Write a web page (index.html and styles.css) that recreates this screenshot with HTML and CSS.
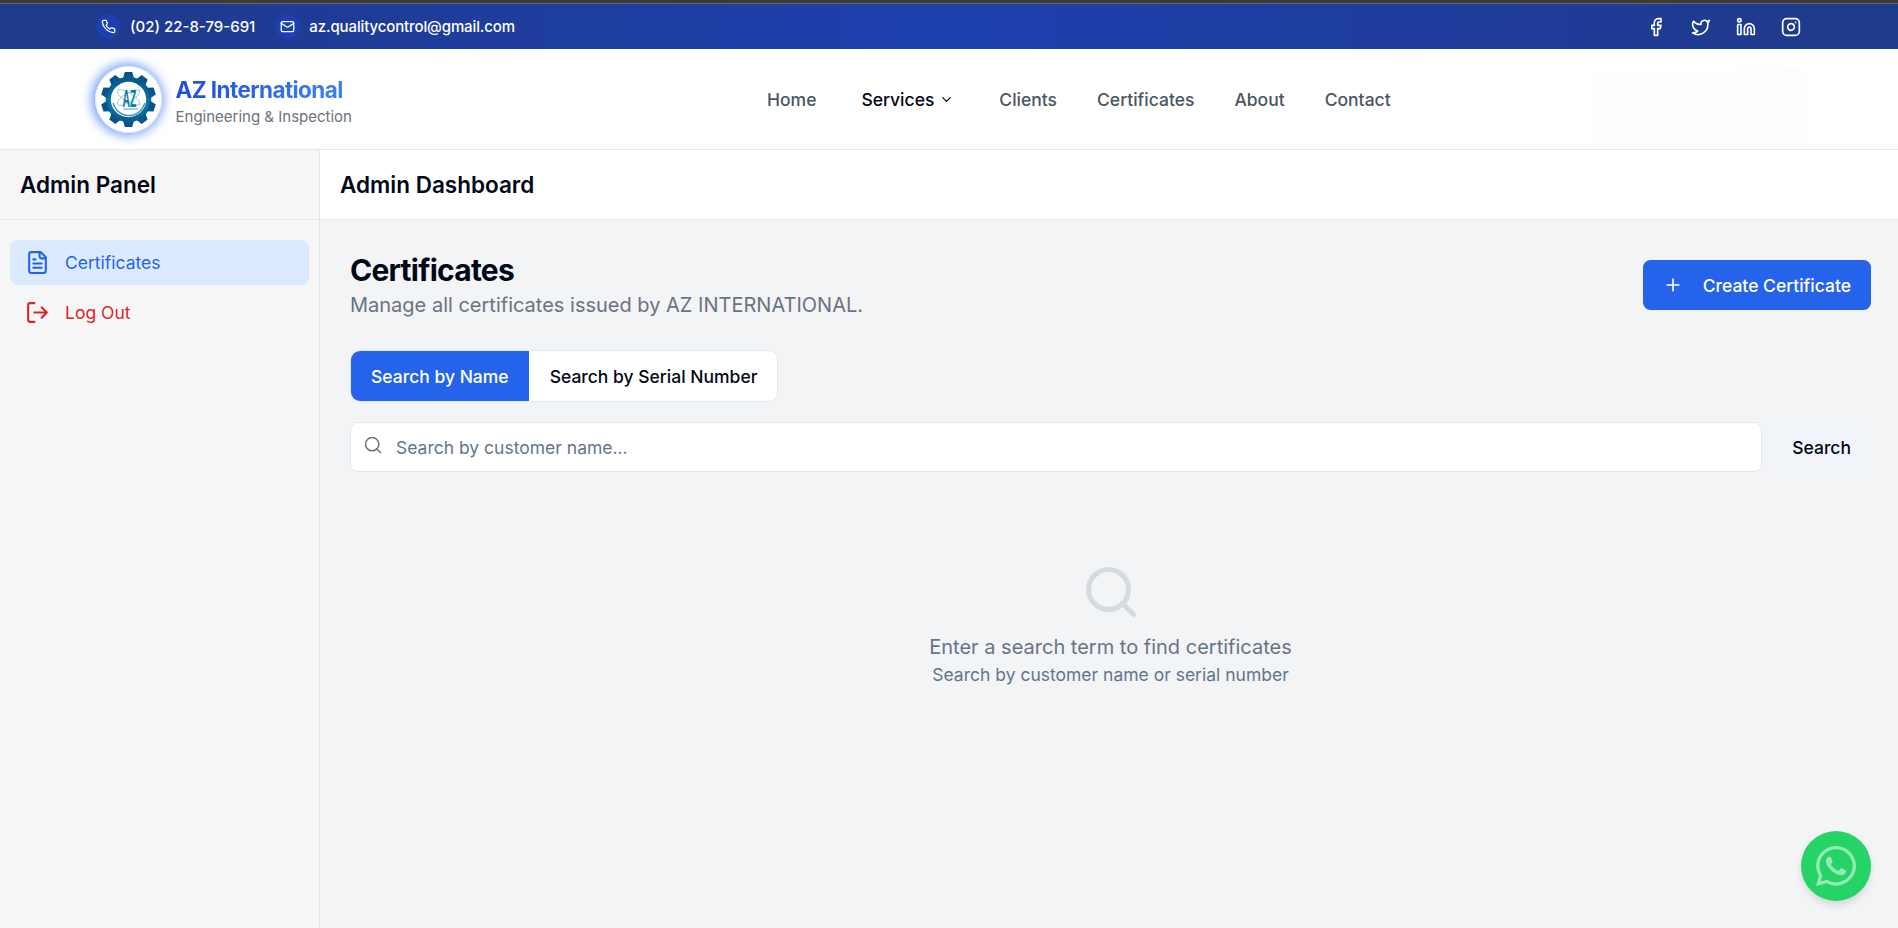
FILE: index.html
```html
<!DOCTYPE html>
<html lang="en">
<head>
<meta charset="utf-8">
<title>AZ International - Admin Dashboard</title>
<link rel="stylesheet" href="styles.css">
</head>
<body>
<div class="topbar">
  <div class="contacts">
    <span class="dot"><svg class="i15" viewBox="0 0 24 24"><path d="M22 16.92v3a2 2 0 0 1-2.18 2 19.79 19.79 0 0 1-8.63-3.07 19.5 19.5 0 0 1-6-6 19.79 19.79 0 0 1-3.07-8.67A2 2 0 0 1 4.11 2h3a2 2 0 0 1 2 1.72 12.84 12.84 0 0 0 .7 2.81 2 2 0 0 1-.45 2.11L8.09 9.91a16 16 0 0 0 6 6l1.27-1.27a2 2 0 0 1 2.11-.45 12.84 12.84 0 0 0 2.81.7A2 2 0 0 1 22 16.92z"/></svg></span>
    <span class="phone">(02) 22-8-79-691</span>
    <span class="dot mail"><svg class="i15" viewBox="0 0 24 24"><rect width="20" height="16" x="2" y="4" rx="2"/><path d="m22 7-8.97 5.7a1.94 1.94 0 0 1-2.06 0L2 7"/></svg></span>
    <span class="email">az.qualitycontrol@gmail.com</span>
  </div>
  <div class="socials">
    <svg class="i20" viewBox="0 0 24 24"><path d="M18 2h-3a5 5 0 0 0-5 5v3H7v4h3v8h4v-8h3l1-4h-4V7a1 1 0 0 1 1-1h3z"/></svg>
    <svg class="i20" viewBox="0 0 24 24"><path d="M22 4s-.7 2.1-2 3.4c1.6 10-9.4 17.3-18 11.6 2.2.1 4.4-.6 6-2C3 15.500.5 9.600 3 5c2.200 2.600 5.600 4.100 9 4-.9-4.200 4-6.600 7-3.800 1.100 0 3-1.200 3-1.200z"/></svg>
    <svg class="i20" viewBox="0 0 24 24"><path d="M16 8a6 6 0 0 1 6 6v7h-4v-7a2 2 0 0 0-4 0v7h-4v-7a6 6 0 0 1 6-6z"/><rect width="4" height="12" x="2" y="9"/><circle cx="4" cy="4" r="2"/></svg>
    <svg class="i20" viewBox="0 0 24 24"><rect width="20" height="20" x="2" y="2" rx="5"/><path d="M16 11.370A4 4 0 1 1 12.630 8 4 4 0 0 1 16 11.370zM17.500 6.500h.01"/></svg>
  </div>
</div>
<header class="header">
  <div class="brand">
    <div class="logo">
      <svg viewBox="-33.500 -33.500 67 67" width="67" height="67">
        <defs>
          <linearGradient id="gear" x1="0" y1="-28" x2="0" y2="28" gradientUnits="userSpaceOnUse"><stop offset="0" stop-color="#065184"/><stop offset=".6" stop-color="#0779a8"/><stop offset="1" stop-color="#07528a"/></linearGradient>
          <path id="tooth" d="M-5.500-21 -3.700-27.500H3.700L5.500-21z"/>
        </defs>
        <g fill="url(#gear)" stroke="none">
          <circle r="22.800"/>
          <use href="#tooth"/><use href="#tooth" transform="rotate(36)"/><use href="#tooth" transform="rotate(72)"/><use href="#tooth" transform="rotate(108)"/><use href="#tooth" transform="rotate(144)"/><use href="#tooth" transform="rotate(180)"/><use href="#tooth" transform="rotate(216)"/><use href="#tooth" transform="rotate(252)"/><use href="#tooth" transform="rotate(288)"/><use href="#tooth" transform="rotate(324)"/>
        </g>
        <circle r="17.700" fill="#fff" stroke="none"/>
        <path d="M-15 4A16 16 0 0 0 16 4" fill="none" stroke="#4592b8" stroke-width="1.500" stroke-dasharray="1.200 .8"/>
        <g fill="none" stroke="#69a9c7" stroke-width=".6"><ellipse rx="13" ry="4.500" transform="translate(0 -2) rotate(32)"/><ellipse rx="13" ry="4.500" transform="translate(0 -2) rotate(-32)"/></g>
        <text class="monogram" transform="translate(1 7) scale(.43 1)" text-anchor="middle">AZ</text>
        <path d="M-5 9.500H9" stroke="#4da0bf" stroke-width="1"/>
      </svg>
    </div>
    <div class="names"><div class="name"><span>AZ International</span></div><div class="tag"><span>Engineering &amp; Inspection</span></div></div>
  </div>
  <nav class="nav">
    <a>Home</a>
    <a class="active">Services<svg class="chev" viewBox="0 0 24 24"><path d="m6 9 6 6 6-6"/></svg></a>
    <a>Clients</a><a>Certificates</a><a>About</a><a>Contact</a>
  </nav>
  <div class="sheen"></div>
</header>
<div class="shell">
  <aside class="side">
    <div class="bar">Admin Panel</div>
    <div class="menu">
      <a class="item current"><svg class="i25" viewBox="0 0 24 24"><path d="M15 2H6a2 2 0 0 0-2 2v16a2 2 0 0 0 2 2h12a2 2 0 0 0 2-2V7Z"/><path d="M14 2v4a2 2 0 0 0 2 2h4M10 9H8M16 13H8M16 17H8"/></svg>Certificates</a>
      <a class="item logout"><svg class="i25" viewBox="0 0 24 24"><path d="M9 21H5a2 2 0 0 1-2-2V5a2 2 0 0 1 2-2h4M16 17l5-5-5-5M21 12H9"/></svg>Log Out</a>
    </div>
  </aside>
  <main class="main">
    <div class="bar white">Admin Dashboard</div>
    <div class="content">
      <div class="head">
        <div><h1>Certificates</h1><p class="sub">Manage all certificates issued by AZ INTERNATIONAL.</p></div>
        <button class="btn primary"><svg class="i20" viewBox="0 0 24 24"><path d="M5 12h14M12 5v14"/></svg>Create Certificate</button>
      </div>
      <div class="toggle"><button class="btn on">Search by Name</button><button class="btn off">Search by Serial Number</button></div>
      <div class="searchrow">
        <div class="field"><svg class="i20" viewBox="0 0 24 24"><circle cx="11" cy="11" r="8"/><path d="m21 21-4.300-4.300"/></svg><span>Search by customer name...</span></div>
        <button class="btn go">Search</button>
      </div>
      <div class="empty">
        <svg class="i60" viewBox="0 0 24 24"><circle cx="11" cy="11" r="8"/><path d="m21 21-4.300-4.300"/></svg>
        <p class="e1">Enter a search term to find certificates</p>
        <p class="e2">Search by customer name or serial number</p>
      </div>
    </div>
  </main>
</div>
<a class="whatsapp"><svg width="40" height="40" viewBox="0 0 448 448"><path d="M380.900 65.100C339 23.100 283.200 0 223.900 0 101.500 0 1.900 99.600 1.900 222c0 39.100 10.200 77.300 29.600 111L0 448l117.700-30.900c32.400 17.700 68.900 27 106.100 27h.1c122.300 0 224.100-99.600 224.100-222 0-59.300-25.200-115-67.100-157zm-157 341.600c-33.200 0-65.700-8.900-94-25.700l-6.700-4-69.800 18.300L72 327.200l-4.400-7c-18.500-29.400-28.200-63.300-28.200-98.200 0-101.700 82.800-184.500 184.600-184.500 49.300 0 95.600 19.200 130.400 54.100 34.800 34.900 56.200 81.200 56.100 130.500 0 101.800-84.900 184.600-186.600 184.600zm101.200-138.200c-5.500-2.800-32.800-16.200-37.900-18-5.100-1.900-8.800-2.800-12.500 2.800-3.700 5.600-14.300 18-17.600 21.800-3.200 3.700-6.500 4.200-12 1.400-32.600-16.300-54-29.100-75.500-66-5.700-9.800 5.700-9.100 16.300-30.300 1.800-3.700.9-6.900-.5-9.700-1.400-2.800-12.500-30.100-17.100-41.200-4.500-10.800-9.100-9.300-12.500-9.500-3.200-.2-6.900-.2-10.600-.2-3.700 0-9.700 1.400-14.800 6.900-5.100 5.600-19.400 19-19.400 46.300 0 27.300 19.900 53.700 22.600 57.400 2.800 3.700 39.100 59.700 94.800 83.800 35.200 15.200 49 16.500 66.600 13.900 10.700-1.600 32.800-13.400 37.400-26.400 4.600-13 4.600-24.100 3.200-26.400-1.300-2.500-5-3.900-10.500-6.600z"/></svg></a>
</body>
</html>
```
FILE: styles.css
```css
* { box-sizing: border-box; margin: 0; }
body {
  height: 928px; overflow: hidden; display: flex; flex-direction: column;
  font-family: Inter, "Liberation Sans", sans-serif; font-size: 17.5px; color: #020817; background: #f3f4f6;
}
svg { fill: none; stroke: currentColor; stroke-width: 2; stroke-linecap: round; stroke-linejoin: round; flex: none; display: block; }
.i15 { width: 15px; height: 15px; }
.i20 { width: 20px; height: 20px; }
.i25 { width: 25px; height: 25px; }
.i60 { width: 60px; height: 60px; }
.topbar {
  height: 49px; flex: none; border-top: 3px solid #3b3b3b; box-shadow: inset 0 1px #66686c;
  background: linear-gradient(90deg, #1e3a8a, #1e40af 50%, #1e3a8a);
  color: #fff; display: flex; justify-content: space-between; align-items: center; padding: 1px 97px 0 96px;
  font-size: 15px; font-weight: 500;
}
.contacts, .socials { display: flex; align-items: center; }
.email { letter-spacing: -.12px; }
.socials { gap: 25px; }
.dot { width: 25px; height: 25px; border-radius: 50%; background: #1e40af; display: flex; align-items: center; justify-content: center; margin-right: 9px; }
.mail { margin-left: 20px; }
.header { height: 101px; flex: none; background: #fff; border-bottom: 1px solid #e2e8f0; display: flex; align-items: center; padding-left: 95px; position: relative; }
.brand { display: flex; align-items: center; gap: 13.5px; width: 672px; }
.logo { width: 67px; height: 67px; border-radius: 50%; background: #fff; box-shadow: inset 0 0 0 1px #e5e7eb, -1px 0 12px 2px #6495fa; }
.monogram { font: bold 24px "Liberation Sans", sans-serif; fill: #087ca9; stroke: none; }
.names { display: flex; flex-direction: column; padding-top: 7px; }
.name { font-size: 22.5px; font-weight: 700; line-height: 28px; letter-spacing: -.58px; }
.name span { color: transparent; background: linear-gradient(90deg, #1d4ed8, #3b82f6); background-clip: text; -webkit-background-clip: text; }
.tag { font-size: 15px; line-height: 25px; color: #6b7280; }
.nav { display: flex; gap: 40px; color: #4b5563; font-weight: 500; align-items: center; }
.nav a { display: flex; align-items: center; }
.nav .active { color: #020817; margin: 0 5px; }
.chev { width: 15px; height: 15px; margin-left: 5px; }
.sheen { position: absolute; right: 92px; top: 20px; width: 300px; height: 80px; background: linear-gradient(90deg, transparent, #fcfdff); }
.shell { flex: 1; display: flex; min-height: 0; }
.side { width: 320px; flex: none; background: #f6f6f6; border-right: 1px solid #e2e8f0; }
.bar { height: 70px; border-bottom: 1px solid #e2e8f0; padding-left: 20px; display: flex; align-items: center; font-size: 22.5px; font-weight: 600; }
.white { background: #fff; }
.menu { padding: 20px 10px; display: flex; flex-direction: column; gap: 5px; }
.item { height: 45px; border-radius: 7.500px; display: flex; align-items: center; gap: 15px; padding-left: 15px; }
.current { background: #dbeafe; color: #2563eb; }
.logout { color: #dc2626; }
.main { flex: 1; display: flex; flex-direction: column; }
.content { padding: 30px 27px 0 30px; }
.head { display: flex; justify-content: space-between; align-items: center; height: 70px; }
h1 { font-size: 30px; line-height: 40px; font-weight: 700; letter-spacing: -.75px; }
.sub { font-size: 20px; line-height: 30px; color: #6b7280; }
.btn { font: 500 17.500px Inter, sans-serif; height: 50px; border: 0; padding: 0 20px; border-radius: 7.500px; color: #020817; white-space: nowrap; }
.primary { background: #2563eb; color: #fff; display: flex; align-items: center; gap: 20px; }
.toggle { display: inline-flex; margin-top: 30px; border: 1px solid #e2e8f0; border-radius: 10px; overflow: hidden; }
.on { background: #2563eb; color: #fff; border-radius: 0; }
.off { background: #fff; border-radius: 0; padding-left: 21px; }
.searchrow { display: flex; gap: 10px; margin-top: 20px; }
.field { flex: 1; height: 50px; background: #fff; border: 1px solid #e2e8f0; border-radius: 7.500px; display: flex; align-items: center; gap: 13px; padding-left: 12px; color: #6b7280; }
.field svg { margin-bottom: 4px; stroke-width: 1.800; }
.field span { color: #64748b; }
.go { background: #f1f5f9; }
.empty { padding-top: 90px; display: flex; flex-direction: column; align-items: center; color: #64748b; }
.empty svg { color: #d5dae0; }
.e1 { font-size: 20px; line-height: 30px; margin-top: 10px; }
.e2 { line-height: 25px; }
.whatsapp { position: absolute; right: 27px; bottom: 27px; width: 70px; height: 70px; border-radius: 50%; background: #25d366; box-shadow: 0 5px 8px -1px #00000020; display: flex; align-items: center; justify-content: center; }
.whatsapp svg { fill: #92e9b3; stroke: none; }
```
